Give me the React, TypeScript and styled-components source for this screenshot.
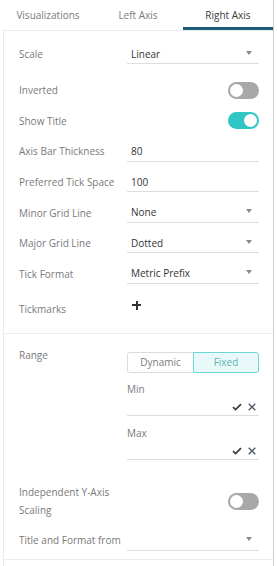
import React, { useState } from "react";
import styled, { createGlobalStyle } from "styled-components";

const GlobalStyle = createGlobalStyle`
  html, body {
    margin: 0;
    padding: 0;
    background: #ffffff;
  }
  body {
    font-family: "Open Sans", "Liberation Sans", sans-serif;
    font-size: 10px;
    color: #333;
  }
`;

const Panel = styled.div`
  box-sizing: border-box;
  width: 271px;
  height: 566px;
  margin-left: 3px;
  border-right: 1px solid #cfcfcf;
  display: flex;
  flex-direction: column;
`;

const Tabs = styled.div`
  display: grid;
  grid-template-columns: repeat(3, 1fr);
  height: 30px;
`;

const Tab = styled.div<{ $active?: boolean }>`
  box-sizing: border-box;
  display: flex;
  align-items: center;
  justify-content: center;
  padding-top: 3px;
  font-size: 10px;
  color: ${(p) => (p.$active ? "#3a3a3a" : "#7a7a7a")};
  border-bottom: 3px solid ${(p) => (p.$active ? "#1d5a78" : "transparent")};
`;

const Body = styled.div`
  flex: 1;
  border-left: 1px solid #ececec;
  border-top: 1px solid #ececec;
`;

const Section = styled.div<{ $top: number; $bottom: number }>`
  padding: ${(p) => p.$top}px 14px ${(p) => p.$bottom}px 15px;
  border-bottom: 1px solid #ececec;
`;

const Row = styled.div<{ $h?: number; $gap?: number }>`
  display: flex;
  align-items: center;
  height: ${(p) => p.$h ?? 30.6}px;
  margin-top: ${(p) => p.$gap ?? 0}px;
`;

const Label = styled.div<{ $top?: boolean }>`
  width: 108px;
  flex-shrink: 0;
  color: #7a7a7a;
  line-height: 18.4px;
  align-self: ${(p) => (p.$top ? "flex-start" : "center")};
`;

const Field = styled.div`
  box-sizing: border-box;
  flex: 1;
  height: 20px;
  display: flex;
  align-items: center;
  padding-left: 4px;
  padding-right: 7px;
  border-bottom: 1px solid #dedede;
  color: #333;
`;

const Caret = styled.span`
  margin-left: auto;
  margin-top: -2px;
  width: 0;
  height: 0;
  border-left: 3.5px solid transparent;
  border-right: 3.5px solid transparent;
  border-top: 4px solid #8a8a8a;
`;

const Switch = styled.button<{ $on?: boolean }>`
  position: relative;
  margin-left: auto;
  width: 31px;
  height: 17px;
  padding: 0;
  border: none;
  border-radius: 9px;
  background: ${(p) => (p.$on ? "#2fc6c4" : "#a8a8a8")};
  cursor: pointer;

  &::after {
    content: "";
    position: absolute;
    top: 2px;
    left: ${(p) => (p.$on ? "16px" : "2px")};
    width: 13px;
    height: 13px;
    border-radius: 50%;
    background: #fff;
  }
`;

const Plus = styled.div`
  position: relative;
  width: 9px;
  height: 9px;
  margin-left: 5px;
  margin-top: -8px;

  &::before,
  &::after {
    content: "";
    position: absolute;
    background: #333;
  }
  &::before {
    left: 0;
    top: 3.5px;
    width: 9px;
    height: 2px;
  }
  &::after {
    left: 3.5px;
    top: 0;
    width: 2px;
    height: 9px;
  }
`;

const RangeGrid = styled.div`
  display: flex;
`;

const RangeControls = styled.div`
  flex: 1;
  padding-top: 6px;
`;

const Segmented = styled.div`
  display: grid;
  grid-template-columns: 1fr 1fr;
  height: 21px;
`;

const Segment = styled.button<{ $active?: boolean }>`
  box-sizing: border-box;
  font-family: inherit;
  font-size: 10px;
  padding: 0;
  cursor: pointer;
  color: ${(p) => (p.$active ? "#5eb2b2" : "#7a7a7a")};
  background: ${(p) => (p.$active ? "#e9f9f9" : "#fff")};
  border: 1px solid ${(p) => (p.$active ? "#6bd8d8" : "#dcdcdc")};
  border-radius: ${(p) => (p.$active ? "0 3px 3px 0" : "3px 0 0 3px")};
  ${(p) => (p.$active ? "" : "border-right: none;")}
`;

const SubLabel = styled.div<{ $gap: number }>`
  color: #7a7a7a;
  line-height: 16px;
  margin-top: ${(p) => p.$gap}px;
`;

const EditLine = styled.div`
  box-sizing: border-box;
  height: 19px;
  display: flex;
  align-items: center;
  justify-content: flex-end;
  gap: 6px;
  padding-top: 2px;
  padding-right: 3px;
  border-bottom: 1px solid #dedede;
`;

function Check() {
  return (
    <svg width="10" height="8" viewBox="0 0 10 8">
      <polyline
        points="1,4.2 3.6,6.6 9,1.2"
        fill="none"
        stroke="#3c3c3c"
        strokeWidth="1.8"
      />
    </svg>
  );
}

function Cross() {
  return (
    <svg width="8" height="8" viewBox="0 0 8 8">
      <path
        d="M0.7 0.7 L7.3 7.3 M7.3 0.7 L0.7 7.3"
        stroke="#4c5566"
        strokeWidth="1.3"
      />
    </svg>
  );
}

function Select({ value }: { value: string }) {
  return (
    <Field>
      {value}
      <Caret />
    </Field>
  );
}

export default function App() {
  const [inverted, setInverted] = useState(false);
  const [showTitle, setShowTitle] = useState(true);
  const [independent, setIndependent] = useState(false);
  const [fixed, setFixed] = useState(true);

  return (
    <>
      <GlobalStyle />
      <Panel>
        <Tabs>
          <Tab>Visualizations</Tab>
          <Tab>Left Axis</Tab>
          <Tab $active>Right Axis</Tab>
        </Tabs>
        <Body>
          <Section $top={8} $bottom={3.5}>
            <Row>
              <Label>Scale</Label>
              <Select value="Linear" />
            </Row>
            <Row $gap={5.5}>
              <Label>Inverted</Label>
              <Switch $on={inverted} onClick={() => setInverted(!inverted)} />
            </Row>
            <Row>
              <Label>Show Title</Label>
              <Switch $on={showTitle} onClick={() => setShowTitle(!showTitle)} />
            </Row>
            <Row>
              <Label>Axis Bar Thickness</Label>
              <Field>80</Field>
            </Row>
            <Row>
              <Label>Preferred Tick Space</Label>
              <Field>100</Field>
            </Row>
            <Row>
              <Label>Minor Grid Line</Label>
              <Select value="None" />
            </Row>
            <Row>
              <Label>Major Grid Line</Label>
              <Select value="Dotted" />
            </Row>
            <Row>
              <Label>Tick Format</Label>
              <Select value="Metric Prefix" />
            </Row>
            <Row $h={40}>
              <Label>Tickmarks</Label>
              <Plus />
            </Row>
          </Section>
          <Section $top={12} $bottom={3}>
            <RangeGrid>
              <Label $top>Range</Label>
              <RangeControls>
                <Segmented>
                  <Segment $active={!fixed} onClick={() => setFixed(false)}>
                    Dynamic
                  </Segment>
                  <Segment $active={fixed} onClick={() => setFixed(true)}>
                    Fixed
                  </Segment>
                </Segmented>
                <SubLabel $gap={8}>Min</SubLabel>
                <EditLine>
                  <Check />
                  <Cross />
                </EditLine>
                <SubLabel $gap={9}>Max</SubLabel>
                <EditLine>
                  <Check />
                  <Cross />
                </EditLine>
              </RangeControls>
            </RangeGrid>
            <Row $h={37} $gap={23}>
              <Label>Independent Y-Axis Scaling</Label>
              <Switch
                $on={independent}
                onClick={() => setIndependent(!independent)}
              />
            </Row>
            <Row $gap={5.5}>
              <Label>Title and Format from</Label>
              <Select value="" />
            </Row>
          </Section>
        </Body>
      </Panel>
    </>
  );
}
